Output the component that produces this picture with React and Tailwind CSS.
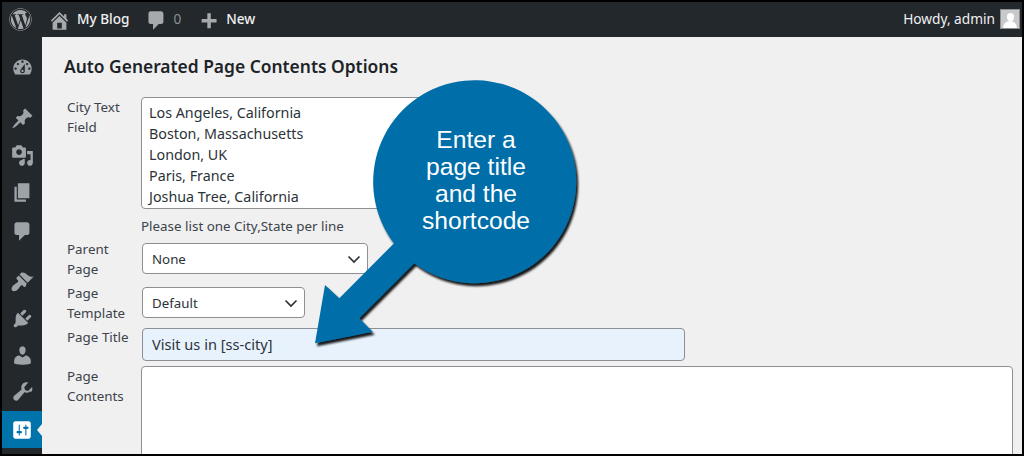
import React from "react";
import { FaWordpress } from "react-icons/fa";

const P = {
  home: "M16 8.5l1.53 1.53-1.06 1.06L10 4.62l-6.47 6.47-1.06-1.06L10 2.5l4 4v-2h2v4zm-6-2.46l6 5.99V18H4v-5.97zM12 17v-5H8v5h4z",
  comment: "M5 2h9c1.1 0 2 .9 2 2v7c0 1.1-.9 2-2 2h-2l-5 5v-5H5c-1.1 0-2-.9-2-2V4c0-1.1.9-2 2-2z",
  plus: "M17 7v3h-5v5H9v-5H4V7h5V2h3v5h5z",
  dashboard: "M3.76 16h12.48c1.1-1.37 1.76-3.11 1.76-5 0-4.42-3.58-8-8-8s-8 3.58-8 8c0 1.89.66 3.63 1.76 5zM10 4c.55 0 1 .45 1 1s-.45 1-1 1-1-.45-1-1 .45-1 1-1zM6 6c.55 0 1 .45 1 1s-.45 1-1 1-1-.45-1-1 .45-1 1-1zm8 0c.55 0 1 .45 1 1s-.45 1-1 1-1-.45-1-1 .45-1 1-1zm-5.37 5.55L12 7v6c0 1.1-.9 2-2 2s-2-.9-2-2c0-.57.24-1.08.63-1.45zM4 10c.55 0 1 .45 1 1s-.45 1-1 1-1-.45-1-1 .45-1 1-1zm12 0c.55 0 1 .45 1 1s-.45 1-1 1-1-.45-1-1 .45-1 1-1zm-5 3c0-.55-.45-1-1-1s-1 .45-1 1 .45 1 1 1 1-.45 1-1z",
  pin: "M10.44 3.02l1.82-1.82 6.36 6.35-1.83 1.82c-1.05-.68-2.48-.57-3.41.36l-.75.75c-.92.93-1.04 2.35-.35 3.41l-1.83 1.82-2.41-2.41-2.8 2.79c-.42.42-3.38 2.71-3.8 2.29s1.86-3.39 2.28-3.81l2.79-2.79L4.1 9.36l1.83-1.82c1.05.69 2.48.57 3.4-.36l.75-.75c.93-.92 1.05-2.35.36-3.41z",
  media: "M13 11V4c0-.55-.45-1-1-1h-1.67L9 1H5L3.67 3H2c-.55 0-1 .45-1 1v7c0 .55.45 1 1 1h10c.55 0 1-.45 1-1zM7 4.5c1.38 0 2.5 1.12 2.5 2.5S8.38 9.5 7 9.5 4.5 8.38 4.5 7 5.62 4.5 7 4.5zM14 6h5v10.5c0 1.38-1.12 2.5-2.5 2.5S14 17.88 14 16.5s1.12-2.5 2.5-2.5c.17 0 .34.02.5.05V9h-3V6zm-4 8.05V13h2v3.5c0 1.38-1.12 2.5-2.5 2.5S7 17.88 7 16.5 8.12 14 9.5 14c.17 0 .34.02.5.05z",
  page: "M6 15V2h10v13H6zm-1 1h8v2H3V5h2v11z",
  brush: "M14.48 11.06L7.41 3.99l1.5-1.5c.5-.56 2.3-.47 3.51.32 1.21.8 1.43 1.28 2.91 2.1 1.18.64 2.45 1.26 4.45.85zm-.71.71L6.7 4.7 4.93 6.47c-.39.39-.39 1.02 0 1.41l1.06 1.06c.39.39.39 1.03 0 1.42-.6.6-1.43 1.11-2.21 1.69-.35.26-.7.53-1.01.84C1.43 13.73.5 15.2.5 16.5c0 .55.2 1.05.58 1.42s.87.58 1.42.58c1.3 0 2.77-.93 3.62-1.77.31-.31.58-.66.84-1.01.58-.78 1.09-1.61 1.69-2.21.39-.39 1.03-.39 1.42 0l1.06 1.06c.39.39 1.02.39 1.41 0z",
  plug: "M13.11 4.36L9.87 7.6 8 5.73l3.24-3.24c.35-.34 1.05-.2 1.56.32.52.51.66 1.21.31 1.55zm-8 1.77l.91-1.12 9.01 9.01-1.19.84c-.71.71-2.63 1.16-3.82 1.16H6.14L4.9 17.26c-.59.59-1.54.59-2.12 0-.59-.58-.59-1.53 0-2.12l1.24-1.24v-3.88c0-1.13.4-3.19 1.09-3.89zm7.26 3.97l3.24-3.24c.34-.35 1.04-.21 1.55.31.52.51.66 1.21.31 1.55l-3.24 3.25z",
  user: "M10 9.25c-2.27 0-2.73-3.44-2.73-3.44C7 4.02 7.82 2 9.97 2c2.16 0 2.98 2.02 2.71 3.81 0 0-.41 3.44-2.68 3.44zm0 2.57L12.72 10c2.39 0 4.52 2.33 4.52 4.53v2.49s-3.65 1.13-7.24 1.13c-3.65 0-7.24-1.13-7.24-1.13v-2.49c0-2.25 1.94-4.48 4.47-4.48z",
  tool: "M16.68 9.77c-1.34 1.34-3.3 1.67-4.95.99l-5.41 6.52c-.99.99-2.59.99-3.58 0s-.99-2.59 0-3.57l6.52-5.42c-.68-1.65-.35-3.61.99-4.95 1.28-1.28 3.12-1.64 4.73-1.08L11.5 6.23l.75 2.52 2.52.75 3.57-3.48c.56 1.6.21 3.44-1.08 4.73z",
  settings: "M18 16V4c0-1.1-.9-2-2-2H4c-1.1 0-2 .9-2 2v12c0 1.1.9 2 2 2h12c1.1 0 2-.9 2-2zM8 11h1c.55 0 1 .45 1 1s-.45 1-1 1H8v1.5c0 .28-.22.5-.5.5s-.5-.22-.5-.5V13H6c-.55 0-1-.45-1-1s.45-1 1-1h1V5.5c0-.28.22-.5.5-.5s.5.22.5.5V11zm5-2h-1c-.55 0-1-.45-1-1s.45-1 1-1h1V5.5c0-.28.22-.5.5-.5s.5.22.5.5V7h1c.55 0 1 .45 1 1s-.45 1-1 1h-1v5.5c0 .28-.22.5-.5.5s-.5-.22-.5-.5V9z",
};

function Ico({ d, className }) {
  return (
    <svg viewBox="0 0 20 20" className={className} fill="currentColor" aria-hidden="true">
      <path d={d} />
    </svg>
  );
}

function Chevron() {
  return (
    <svg viewBox="0 0 16 16" className="w-4 h-4" fill="none" stroke="#2c3338" strokeWidth="1.7">
      <path d="M2.5 5.5 8 11l5.5-5.5" />
    </svg>
  );
}

function SideItem({ d, className }) {
  return (
    <div className={"flex items-center justify-center h-[37px] text-[#9ea3a8] " + (className || "")}>
      <Ico d={d} className="w-[23px] h-[23px]" />
    </div>
  );
}

function Label({ children, className }) {
  return <div className={"text-[13.4px] leading-[20px] text-[#3c434a] pl-[25px] " + (className || "")}>{children}</div>;
}

export default function App() {
  return (
    <div className="relative w-[1024px] h-[456px] overflow-hidden border-2 border-black bg-[#f0f0f1] font-['Noto_Sans','Open_Sans',sans-serif]">
      <header className="flex items-center justify-between h-[35px] bg-[#23282d] text-[#f0f0f1] text-[13.6px] font-medium">
        <div className="flex items-center">
          <FaWordpress className="w-[23px] h-[23px] ml-[7px] -mt-[1px] text-[#a7aaad]" />
          <Ico d={P.home} className="w-[23px] h-[23px] ml-[16px] mt-[2px] text-[#a7aaad]" />
          <span className="ml-[6px]">My Blog</span>
          <Ico d={P.comment} className="w-[23px] h-[23px] ml-[15px] mt-[2px] text-[#a7aaad]" />
          <span className="ml-[6px] text-[#8c8f94] font-normal">0</span>
          <Ico d={P.plus} className="w-[23px] h-[23px] ml-[16px] mt-[5px] text-[#a7aaad]" />
          <span className="ml-[6px]">New</span>
        </div>
        <div className="flex items-center">
          <span className="font-normal text-[13.7px]">Howdy, admin</span>
          <div className="w-[20px] h-[20px] ml-[5px] mr-[2px] border border-[#8c8f94] bg-[#c9c9c9] overflow-hidden">
            <div className="mx-auto mt-[3px] w-[7px] h-[8px] rounded-full bg-white" />
            <div className="mx-auto w-[14px] h-[8px] rounded-t-full bg-white" />
          </div>
        </div>
      </header>
      <div className="flex h-[417px]">
        <nav className="w-[40px] shrink-0 bg-[#23282d] flex flex-col pt-[12px]">
          <SideItem d={P.dashboard} />
          <SideItem d={P.pin} className="mt-[14px]" />
          <SideItem d={P.media} />
          <SideItem d={P.page} />
          <SideItem d={P.comment} className="mt-[2px]" />
          <SideItem d={P.brush} className="mt-[13px]" />
          <SideItem d={P.plug} />
          <SideItem d={P.user} />
          <SideItem d={P.tool} className="-mt-[1px]" />
          <div className="relative flex items-center justify-center h-[37px] mt-[1px] bg-[#0073aa] text-white">
            <Ico d={P.settings} className="w-[22px] h-[22px]" />
            <div className="absolute right-0 top-[13px] w-0 h-0 border-y-[6px] border-y-transparent border-r-[5px] border-r-[#f0f0f1]" />
          </div>
        </nav>
        <main className="flex-1 min-w-0 pt-[17px]">
          <h1 className="pl-[22px] text-[17.4px] leading-[24px] font-semibold text-[#1d2327]">Auto Generated Page Contents Options</h1>
          <div className="mt-[19px] flex">
            <Label className="w-[99px]">City Text Field</Label>
            <div className="w-[283px] h-[112px] bg-white border border-[#8c8f94] rounded-[4px] px-[7px] py-[4px] text-[14.3px] leading-[21px] text-[#2c3338]">
              <div>Los Angeles, California</div>
              <div>Boston, Massachusetts</div>
              <div>London, UK</div>
              <div>Paris, France</div>
              <div>Joshua Tree, California</div>
            </div>
          </div>
          <div className="mt-[7px] ml-[99px] text-[13.4px] leading-[20px] text-[#3c434a]">Please list one City,State per line</div>
          <div className="mt-[3px] flex">
            <Label className="w-[100px]">Parent Page</Label>
            <div className="w-[226px] h-[31px] mt-[4px] bg-white border border-[#8c8f94] rounded-[4px] pl-[9px] pr-[5px] flex items-center justify-between text-[13.3px] text-[#2c3338]">
              <span className="mt-[2px]">None</span>
              <Chevron />
            </div>
          </div>
          <div className="mt-[4px] flex">
            <Label className="w-[100px]">Page Template</Label>
            <div className="w-[163px] h-[31px] mt-[4px] bg-white border border-[#8c8f94] rounded-[4px] pl-[9px] pr-[5px] flex items-center justify-between text-[13.3px] text-[#2c3338]">
              <span className="mt-[2px]">Default</span>
              <Chevron />
            </div>
          </div>
          <div className="mt-[4px] flex">
            <Label className="w-[100px]">Page Title</Label>
            <div className="w-[543px] h-[33px] mt-[1px] bg-[#e8f2fd] border border-[#8c8f94] rounded-[4px] px-[9px] flex items-center text-[14.6px] text-[#2c3338]">
              Visit us in [ss-city]
            </div>
          </div>
          <div className="mt-[5px] flex">
            <Label className="w-[99px]">Page Contents</Label>
            <div className="w-[872px] h-[120px] bg-white border border-[#8c8f94] rounded-[4px]" />
          </div>
        </main>
      </div>

      <svg className="absolute left-[298px] top-[70px] w-[300px] h-[290px] overflow-visible" viewBox="300 72 300 290" aria-hidden="true">
        <defs>
          <filter id="sh" x="-20%" y="-20%" width="140%" height="140%">
            <feDropShadow dx="2" dy="3" stdDeviation="1.2" floodColor="#000" floodOpacity="0.9" />
          </filter>
        </defs>
        <path
          filter="url(#sh)"
          fill="#006ea8"
          d="M394 243.3 A101.5 101.5 0 1 1 414.3 263.3 L359.3 318.3 L372.7 331.7 L315 343.3 L325 285 L339.3 298.3 Z"
        />
      </svg>
      <div className="absolute left-[374px] top-[124px] w-[200px] text-center text-white text-[24.6px] leading-[27px] font-['Liberation_Sans',sans-serif]">
        Enter a<br />page title<br />and the<br />shortcode
      </div>
    </div>
  );
}
